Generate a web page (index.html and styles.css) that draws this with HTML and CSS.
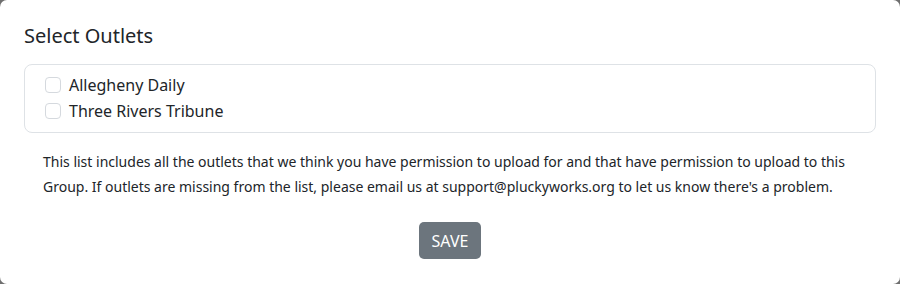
FILE: index.html
```html
<!DOCTYPE html>
<html lang="en">
<head>
    <meta charset="UTF-8">
    <meta name="viewport" content="width=device-width, initial-scale=1.0">
    <title>Select Outlets</title>
    <link rel="stylesheet" href="styles.css">
</head>
<body>

    <div class="modal">
        <h2 class="modal-title">Select Outlets</h2>
        <div class="outlet-list">
            <label class="outlet">
                <input type="checkbox" class="outlet-check">
                <span>Allegheny Daily</span>
            </label>
            <label class="outlet">
                <input type="checkbox" class="outlet-check">
                <span>Three Rivers Tribune</span>
            </label>
        </div>
        <p class="help-text">
            This list includes all the outlets that we think you have permission to upload for and that have permission to upload to this Group. If outlets are missing from the list, please email us at support@pluckyworks.org to let us know there's a problem.
        </p>
        <div class="actions">
            <button class="btn-save">SAVE</button>
        </div>
    </div>

</body>
</html>
```

FILE: styles.css
```css
html,body{
    margin: 0;
    height: 100%;
    background-color: #6f6f6f;
    font-family: "Noto Sans", "Open Sans", sans-serif;
    color: #212529;
}
.modal{
    box-sizing: border-box;
    height: 100%;
    background-color: #fff;
    border-radius: 7px;
    padding: 24px 24px 0 24px;
}
.modal-title{
    margin: 0 0 16px 0;
    font-size: 20px;
    font-weight: 400;
    line-height: 24px;
}
.outlet-list{
    border: 1px solid #dee2e6;
    border-radius: 8px;
    padding: 7px 20px 8px 20px;
}
.outlet{
    display: flex;
    align-items: center;
    gap: 8px;
    font-size: 16px;
    line-height: 26px;
}
.outlet-check{
    appearance: none;
    margin: 0;
    width: 16px;
    height: 16px;
    border: 1px solid #d5d9de;
    border-radius: 4px;
    background-color: #fff;
}
.help-text{
    margin: 16px 19px 0 19px;
    font-size: 14px;
    line-height: 25px;
}
.actions{
    display: flex;
    justify-content: center;
    margin-top: 23px;
}
.btn-save{
    background-color: #6c757d;
    border: 0;
    border-radius: 5px;
    color: #fff;
    font-family: inherit;
    font-size: 16px;
    height: 37px;
    padding: 0 13px;
    cursor: pointer;
}
```
